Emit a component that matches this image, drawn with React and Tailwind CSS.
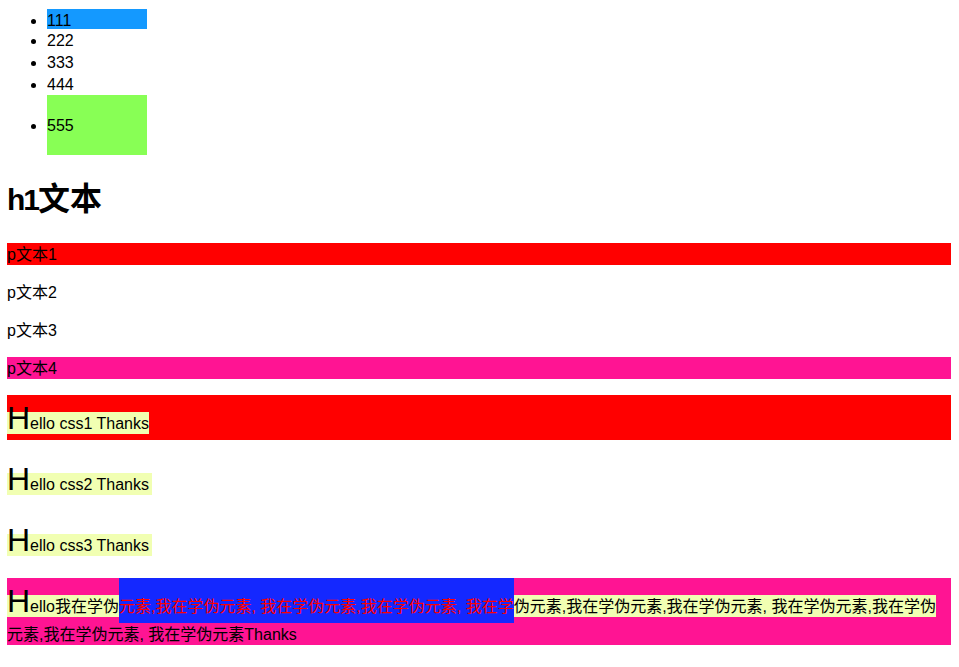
export default function App() {
  const font = "font-['Liberation_Sans','Noto_Sans_CJK_SC',sans-serif]";
  const yellow = "bg-[#f1ffb2]";
  return (
    <div className={`${font} pl-[7px] pr-[8px] pt-[9px] text-[16px] leading-[22px] text-black bg-white min-h-[667px]`}>
      <ul className="list-disc pl-[40px]">
        <li className="w-[100px] h-[20px] pt-[1px] bg-[#1499ff]">111</li>
        <li className="h-[22px] pt-[1px]">222</li>
        <li className="h-[22px] pt-[1px]">333</li>
        <li className="h-[22px] pt-[1px]">444</li>
        <li className="w-[100px] h-[60px] pt-[1px] leading-[60px] bg-[#88ff55]">555</li>
      </ul>
      <h1 className="mt-[21px] h-[45px] pt-[1px] text-[32px] leading-[45px] font-bold">
        <span className="text-[30px] tracking-[-2px]">h1</span>文本
      </h1>
      <p className="mt-[22px] h-[22px] pt-[1px] bg-[#ff0000]">p文本1</p>
      <p className="mt-[16px] h-[22px] pt-[1px]">p文本2</p>
      <p className="mt-[16px] h-[22px] pt-[1px]">p文本3</p>
      <p className="mt-[16px] h-[22px] pt-[1px] bg-[#ff1493]">p文本4</p>

      <div className="mt-[16px] h-[45px] bg-[#ff0000] flex items-end">
        <span className={`mb-[6px] h-[22px] pt-[1px] ${yellow}`}>
          <span className="text-[32px] leading-[0px]">H</span>ello css1 Thanks
        </span>
      </div>
      <div className="mt-[16px] h-[45px] flex items-end">
        <span className={`mb-[6px] h-[22px] pt-[1px] pr-[3px] ${yellow}`}>
          <span className="text-[32px] leading-[0px]">H</span>ello css2 Thanks
        </span>
      </div>
      <div className="mt-[16px] h-[45px] flex items-end">
        <span className={`mb-[6px] h-[22px] pt-[1px] pr-[3px] ${yellow}`}>
          <span className="text-[32px] leading-[0px]">H</span>ello css3 Thanks
        </span>
      </div>

      <div className="mt-[16px] bg-[#ff1493]">
        <div className="flex items-end h-[45px] whitespace-nowrap">
          <span className={`mb-[6px] h-[22px] pt-[1px] ${yellow}`}>
            <span className="text-[32px] leading-[0px]">H</span>ello我在学伪
          </span>
          <span className="h-[45px] pt-[18px] bg-[#1428ff] text-[#ff0000]">
            元素,我在学伪元素, 我在学伪元素,我在学伪元素, 我在学
          </span>
          <span className={`mb-[6px] h-[22px] pt-[1px] ${yellow}`}>
            伪元素,我在学伪元素,我在学伪元素, 我在学伪元素,我在学伪
          </span>
        </div>
        <div className="h-[22px] pt-[1px]">元素,我在学伪元素, 我在学伪元素Thanks</div>
      </div>
    </div>
  );
}
